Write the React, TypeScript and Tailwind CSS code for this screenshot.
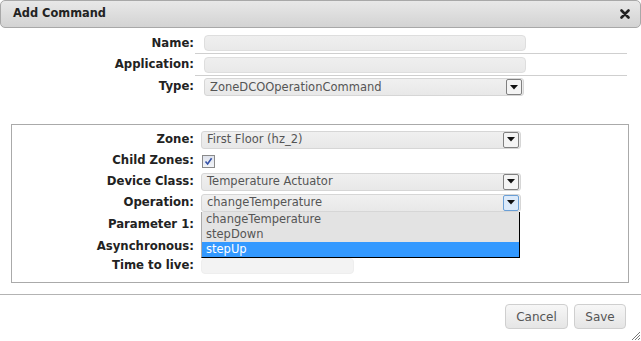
import React from "react"

const font = { fontFamily: '"DejaVu Sans", Verdana, sans-serif' }

const Arrow = ({ active }: { active?: boolean }) => (
  <div
    className={
      "flex h-[16px] w-[16px] items-center justify-center rounded-[2px] border " +
      (active ? "border-[#6a9fd6] bg-[#dceafa]" : "border-[#808080] bg-[#f4f4f4]")
    }
  >
    <svg width="8" height="5" viewBox="0 0 8 5">
      <path d="M0 0 L8 0 L4 4.5 Z" fill="#111" />
    </svg>
  </div>
)

const Select = ({ value, width, active }: { value: string; width: string; active?: boolean }) => (
  <div
    className={
      "flex h-[18px] items-center justify-between rounded-[3px] border border-[#d6d6d6] bg-gradient-to-b from-[#f0f0f0] to-[#e8e8e8] pl-[5px] pr-px text-[11.5px] text-[#555] " +
      width
    }
  >
    <span className="pt-px leading-none">{value}</span>
    <Arrow active={active} />
  </div>
)

const TextInput = ({ width }: { width: string }) => (
  <div className={"h-[16px] rounded-[4px] border border-[#dedede] bg-gradient-to-b from-[#efefef] to-[#e9e9e9] " + width} />
)

const Label = ({ children }: { children: React.ReactNode }) => (
  <div className="w-[195px] shrink-0 pr-px text-right text-[11.7px] font-bold text-[#222]">{children}</div>
)

const Checkbox = () => (
  <div className="flex h-[13px] w-[13px] items-center justify-center border border-[#8a8a8a] bg-gradient-to-b from-[#dfe3ec] to-[#f2f4f8]">
    <svg width="9" height="9" viewBox="0 0 9 9">
      <path d="M1.5 4.5 L3.6 7 L7.6 1.2" stroke="#3552a8" strokeWidth="1.6" fill="none" />
    </svg>
  </div>
)

export default function App() {
  return (
    <div className="relative h-[341px] w-[641px] overflow-hidden bg-white" style={font}>
      {/* title bar */}
      <div className="flex h-[28px] items-center justify-between rounded-[5px] border border-[#a8a8a8] bg-gradient-to-b from-[#e8e8e8] to-[#d3d3d3] pl-[12px] pr-[10px]">
        <span className="text-[11.4px] font-bold text-[#222]">Add Command</span>
        <svg width="10" height="10" viewBox="0 0 10 10">
          <path d="M1.5 1.5 L8.5 8.5 M8.5 1.5 L1.5 8.5" stroke="#222" strokeWidth="2.6" strokeLinecap="round" />
        </svg>
      </div>

      {/* top fields */}
      <div className="mt-[5px] flex flex-col">
        <div className="flex h-[21px] items-center">
          <Label>Name:</Label>
          <div className="flex h-full w-[432px] items-center border-b border-[#cfcfcf] pl-[9px]">
            <TextInput width="w-[322px]" />
          </div>
        </div>
        <div className="flex h-[22px] items-center">
          <Label>Application:</Label>
          <div className="flex h-full w-[432px] items-center border-b border-[#cfcfcf] pl-[9px]">
            <TextInput width="w-[322px]" />
          </div>
        </div>
        <div className="flex h-[22px] items-center">
          <Label>Type:</Label>
          <div className="pl-[9px]">
            <Select value="ZoneDCOOperationCommand" width="w-[320px]" />
          </div>
        </div>
      </div>

      {/* fieldset */}
      <div className="relative mt-[26px] ml-[11px] h-[159px] w-[618px] border border-[#aaaaaa] pt-[4px]">
        <div className="-ml-[12px] flex flex-col">
          <div className="flex h-[21px] items-center">
            <Label>Zone:</Label>
            <div className="pl-[6px]">
              <Select value="First Floor (hz_2)" width="w-[320px]" />
            </div>
          </div>
          <div className="flex h-[21px] items-center">
            <Label>Child Zones:</Label>
            <div className="pl-[7px] pt-px">
              <Checkbox />
            </div>
          </div>
          <div className="flex h-[21px] items-center">
            <Label>Device Class:</Label>
            <div className="pl-[6px]">
              <Select value="Temperature Actuator" width="w-[320px]" />
            </div>
          </div>
          <div className="relative flex h-[21px] items-center">
            <Label>Operation:</Label>
            <div className="pl-[6px]">
              <Select value="changeTemperature" width="w-[320px]" active />
            </div>
            {/* open dropdown list */}
            <div className="absolute left-[201px] top-[20px] z-10 flex w-[319px] flex-col border-l border-l-[#aaaaaa] border-r border-b border-r-black border-b-black bg-[#e3e3e3] text-[11.5px] leading-[15px]">
              <div className="px-[4px] text-[#555]">changeTemperature</div>
              <div className="px-[4px] text-[#555]">stepDown</div>
              <div className="bg-[#3399ff] px-[4px] text-white">stepUp</div>
            </div>
          </div>
          <div className="flex h-[24px] items-center">
            <Label>Parameter 1:</Label>
            <div className="pl-[6px]">
              <TextInput width="w-[152px]" />
            </div>
          </div>
          <div className="flex h-[19px] items-center">
            <Label>Asynchronous:</Label>
            <div className="pl-[6px]">
              <Checkbox />
            </div>
          </div>
          <div className="flex h-[19px] items-center">
            <Label>Time to live:</Label>
            <div className="pl-[6px]">
              <div className="h-[16px] w-[153px] rounded-[4px] border border-[#eeeeee] bg-[#f3f3f3]" />
            </div>
          </div>
        </div>
      </div>

      {/* button bar */}
      <div className="mt-[11px] flex justify-end gap-[6px] border-t border-[#b3b3b3] pr-[15px] pt-[9px]">
        <button className="h-[25px] w-[63px] rounded-[4px] border border-[#cfcfcf] bg-gradient-to-b from-[#f7f7f7] to-[#e5e5e5] text-[12px] text-[#555]">
          Cancel
        </button>
        <button className="h-[25px] w-[52px] rounded-[4px] border border-[#cfcfcf] bg-gradient-to-b from-[#f7f7f7] to-[#e5e5e5] text-[12px] text-[#555]">
          Save
        </button>
      </div>

      {/* resize grip */}
      <svg className="absolute bottom-0 right-0" width="12" height="12" viewBox="0 0 12 12">
        <path d="M11 3 L3 11 M11 6 L6 11 M11 9 L9 11" stroke="#777" strokeWidth="1" />
      </svg>
    </div>
  )
}
